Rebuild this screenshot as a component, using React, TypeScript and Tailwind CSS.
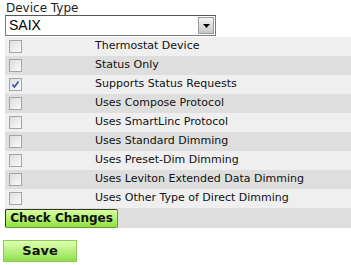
import React from 'react';

const options = [
  { label: 'Thermostat Device', checked: false },
  { label: 'Status Only', checked: false },
  { label: 'Supports Status Requests', checked: true },
  { label: 'Uses Compose Protocol', checked: false },
  { label: 'Uses SmartLinc Protocol', checked: false },
  { label: 'Uses Standard Dimming', checked: false },
  { label: 'Uses Preset-Dim Dimming', checked: false },
  { label: 'Uses Leviton Extended Data Dimming', checked: false },
  { label: 'Uses Other Type of Direct Dimming', checked: false },
];

function CheckBox({ checked }: { checked: boolean }) {
  return (
    <div className="w-[13px] h-[13px] border border-[#a5a5a5] bg-gradient-to-br from-[#dcdcdc] to-[#fbfbfb] flex items-center justify-center">
      {checked && (
        <svg width="9" height="9" viewBox="0 0 9 9">
          <path d="M1.5 4.5 L3.5 7 L7.5 1.5" fill="none" stroke="#3a4aa8" strokeWidth="1.6" />
        </svg>
      )}
    </div>
  );
}

export default function App() {
  return (
    <div className="w-[351px] h-[265px] bg-white text-[#222]" style={{ fontFamily: 'Verdana, "DejaVu Sans", sans-serif' }}>
      <div className="pl-[6px] pt-[1px] text-[12px] leading-[14px]">Device Type</div>
      <div className="ml-[5px] w-[211px] h-[21px] border border-[#7a7a7a] border-t-[#555] flex items-center justify-between bg-white">
        <span className="pl-[3px] text-[14px] text-black" style={{ fontFamily: '"Liberation Sans", Arial, sans-serif' }}>SAIX</span>
        <div className="w-[16px] h-[17px] mr-[1px] border border-[#9a9a9a] bg-gradient-to-b from-[#f4f4f4] to-[#c8c8c8] flex items-center justify-center">
          <svg width="7" height="4" viewBox="0 0 7 4">
            <path d="M0 0 L7 0 L3.5 4 Z" fill="#000" />
          </svg>
        </div>
      </div>
      <div className="ml-[5px] mt-[1px]">
        {options.map((o, i) => (
          <div key={o.label} className={`h-[19px] flex items-center text-[11px] ${i % 2 === 0 ? 'bg-[#efefef]' : 'bg-[#dedede]'}`}>
            <div className="w-[90px] pl-[4px]">
              <CheckBox checked={o.checked} />
            </div>
            <span className="text-[#111]">{o.label}</span>
          </div>
        ))}
        <div className="h-[20px] bg-[#dedede] flex items-center">
          <button className="h-[19px] w-[113px] border border-[#333] border-r-[#6a9a2a] border-b-[#6a9a2a] bg-gradient-to-b from-[#d9ff9c] to-[#8ee03a] text-[12px] font-bold leading-none text-[#111] rounded-[2px]" style={{ fontFamily: 'Verdana, "DejaVu Sans", sans-serif' }}>
            Check Changes
          </button>
        </div>
      </div>
      <div className="ml-[3px] mt-[10px]">
        <button className="w-[74px] h-[22px] border border-[#8cc95a] bg-gradient-to-b from-[#dfffb0] to-[#8fe04a] text-[13px] font-bold leading-none text-[#111]" style={{ fontFamily: 'Verdana, "DejaVu Sans", sans-serif' }}>
          Save
        </button>
      </div>
    </div>
  );
}
